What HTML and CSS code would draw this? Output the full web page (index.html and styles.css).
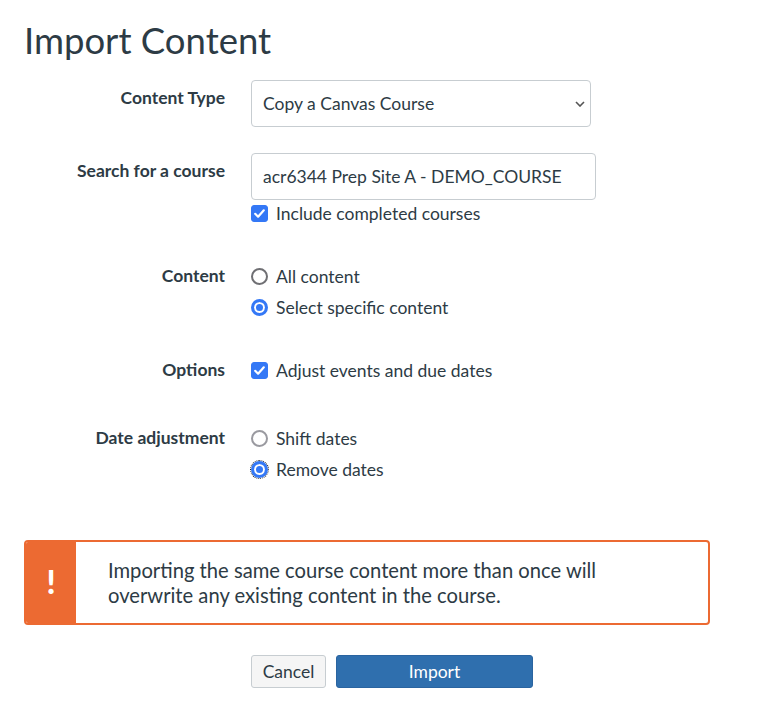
FILE: index.html
```html
<!DOCTYPE html>
<html lang="en">
<head>
  <meta charset="UTF-8" />
  <meta name="viewport" content="width=device-width, initial-scale=1" />
  <title>Import Content</title>
  <link rel="stylesheet" href="styles.css">
</head>
<body>
  <div class="page">
    <h1>Import Content</h1>

    <form class="import-form">
      <div class="field">
        <label class="field-label" for="contentType">Content Type</label>
        <div class="field-control">
          <div class="select-wrap">
            <select id="contentType">
              <option>Copy a Canvas Course</option>
            </select>
            <svg class="chevron" width="10" height="6" viewBox="0 0 10 6"><path d="M1 1l4 4 4-4" fill="none" stroke="#555" stroke-width="1.6"/></svg>
          </div>
        </div>
      </div>

      <div class="field">
        <label class="field-label" for="courseSearch">Search for a course</label>
        <div class="field-control">
          <input id="courseSearch" class="text-input" type="text" value="acr6344 Prep Site A - DEMO_COURSE" />
          <label class="option option-tight"><input type="checkbox" checked /> Include completed courses</label>
        </div>
      </div>

      <div class="field field-content">
        <span class="field-label plain">Content</span>
        <div class="field-control">
          <label class="option"><input type="radio" name="content" /> All content</label>
          <label class="option"><input type="radio" name="content" checked /> Select specific content</label>
        </div>
      </div>

      <div class="field field-options">
        <span class="field-label plain">Options</span>
        <div class="field-control">
          <label class="option"><input type="checkbox" checked /> Adjust events and due dates</label>
        </div>
      </div>

      <div class="field field-dates">
        <span class="field-label plain">Date adjustment</span>
        <div class="field-control">
          <label class="option"><input type="radio" name="dates" class="muted" /> Shift dates</label>
          <label class="option"><input type="radio" name="dates" class="focused" checked /> Remove dates</label>
        </div>
      </div>
    </form>

    <div class="alert">
      <div class="alert-icon">!</div>
      <p class="alert-text">Importing the same course content more than once will overwrite any existing content in the course.</p>
    </div>

    <div class="actions">
      <button type="button" class="btn">Cancel</button>
      <button type="button" class="btn btn-primary">Import</button>
    </div>
  </div>
</body>
</html>
```

FILE: styles.css
```css
:root {
  --text-main: #2d3b45;
  --border: #c7cdd1;
  --blue: #3478f6;
  --orange: #ec6a32;
  --btn-blue: #2f6fae;
}
body {
  margin: 0;
  font-family: Lato, "Noto Sans", sans-serif;
  color: var(--text-main);
  background: #fff;
}
.page {
  padding: 18px 24px 24px 24px;
}
h1 {
  margin: 0 0 18px 0;
  font-size: 36.5px;
  font-weight: 400;
  line-height: 44px;
}
.field {
  display: grid;
  grid-template-columns: 201px 1fr;
  column-gap: 26px;
  margin-bottom: 26px;
}
.field-label {
  text-align: right;
  font-weight: 700;
  font-size: 17.5px;
  line-height: 22px;
  padding-top: 7px;
}
.field-label.plain {
  padding-top: 0;
  line-height: 30px;
}
.field-content { margin-top: 35px; margin-bottom: 0; }
.field-options { margin-top: 32px; margin-bottom: 0; }
.field-dates { margin-top: 37px; margin-bottom: 0; }

.select-wrap {
  position: relative;
  width: 340px;
}
select {
  appearance: none;
  -webkit-appearance: none;
  width: 100%;
  height: 47px;
  box-sizing: border-box;
  border: 1px solid var(--border);
  border-radius: 4px;
  background: #fff;
  padding: 0 30px 0 11px;
  font-family: inherit;
  font-size: 17.5px;
  color: var(--text-main);
}
.chevron {
  position: absolute;
  right: 6px;
  top: 21px;
}
.text-input {
  display: block;
  width: 345px;
  height: 47px;
  box-sizing: border-box;
  border: 1px solid var(--border);
  border-radius: 4px;
  padding: 0 11px;
  font-family: inherit;
  font-size: 17.5px;
  color: var(--text-main);
}
.option {
  display: flex;
  align-items: center;
  gap: 8px;
  height: 31px;
  font-size: 17.5px;
}
.option-tight {
  height: 26px;
}
.option input {
  appearance: none;
  -webkit-appearance: none;
  margin: 0;
  flex: none;
}
.option input[type="checkbox"] {
  width: 17px;
  height: 17px;
  border-radius: 3px;
  border: 1px solid #8a8f96;
  background: #fff;
}
.option input[type="checkbox"]:checked {
  border-color: var(--blue);
  background: var(--blue) url("data:image/svg+xml,%3Csvg xmlns='http://www.w3.org/2000/svg' viewBox='0 0 17 17'%3E%3Cpath d='M4.2 8.8l2.9 2.9 5.7-6.4' fill='none' stroke='%23fff' stroke-width='2.2' stroke-linecap='round' stroke-linejoin='round'/%3E%3C/svg%3E") center/17px 17px no-repeat;
}
.option input[type="radio"] {
  width: 17px;
  height: 17px;
  border-radius: 50%;
  border: 2px solid #6f6f73;
  box-sizing: border-box;
  background: #fff;
}
.option input[type="radio"].muted {
  border-color: #9a9aa0;
}
.option input[type="radio"]:checked {
  border: 3.5px solid var(--blue);
  background: #fff;
  box-shadow: inset 0 0 0 2px #fff, inset 0 0 0 8px var(--blue);
}
.option input[type="radio"].focused {
  outline: 1px dotted #222;
  outline-offset: 0;
}

.alert {
  display: flex;
  margin-top: 55px;
  width: 686px;
  height: 85px;
  box-sizing: border-box;
  border: 2px solid var(--orange);
  border-radius: 4px;
  overflow: hidden;
}
.alert-icon {
  width: 50px;
  flex: none;
  background: var(--orange);
  color: #fff;
  font-weight: 900;
  font-size: 32px;
  line-height: 1;
  display: flex;
  align-items: center;
  justify-content: center;
  padding-bottom: 2px;
  box-sizing: border-box;
}
.alert-text {
  margin: 0;
  padding: 0 0 0 32px;
  align-self: center;
  width: 525px;
  font-size: 20.2px;
  line-height: 25px;
}
.actions {
  display: flex;
  gap: 10px;
  margin-top: 30px;
  padding-left: 227px;
}
.btn {
  width: 75px;
  height: 33px;
  padding: 0;
  font-family: inherit;
  font-size: 17.5px;
  color: var(--text-main);
  background: #f5f5f5;
  border: 1px solid #c7cdd1;
  border-radius: 3px;
}
.btn-primary {
  width: 197px;
  color: #fff;
  background: var(--btn-blue);
  border-color: #2a64a0;
}
```
